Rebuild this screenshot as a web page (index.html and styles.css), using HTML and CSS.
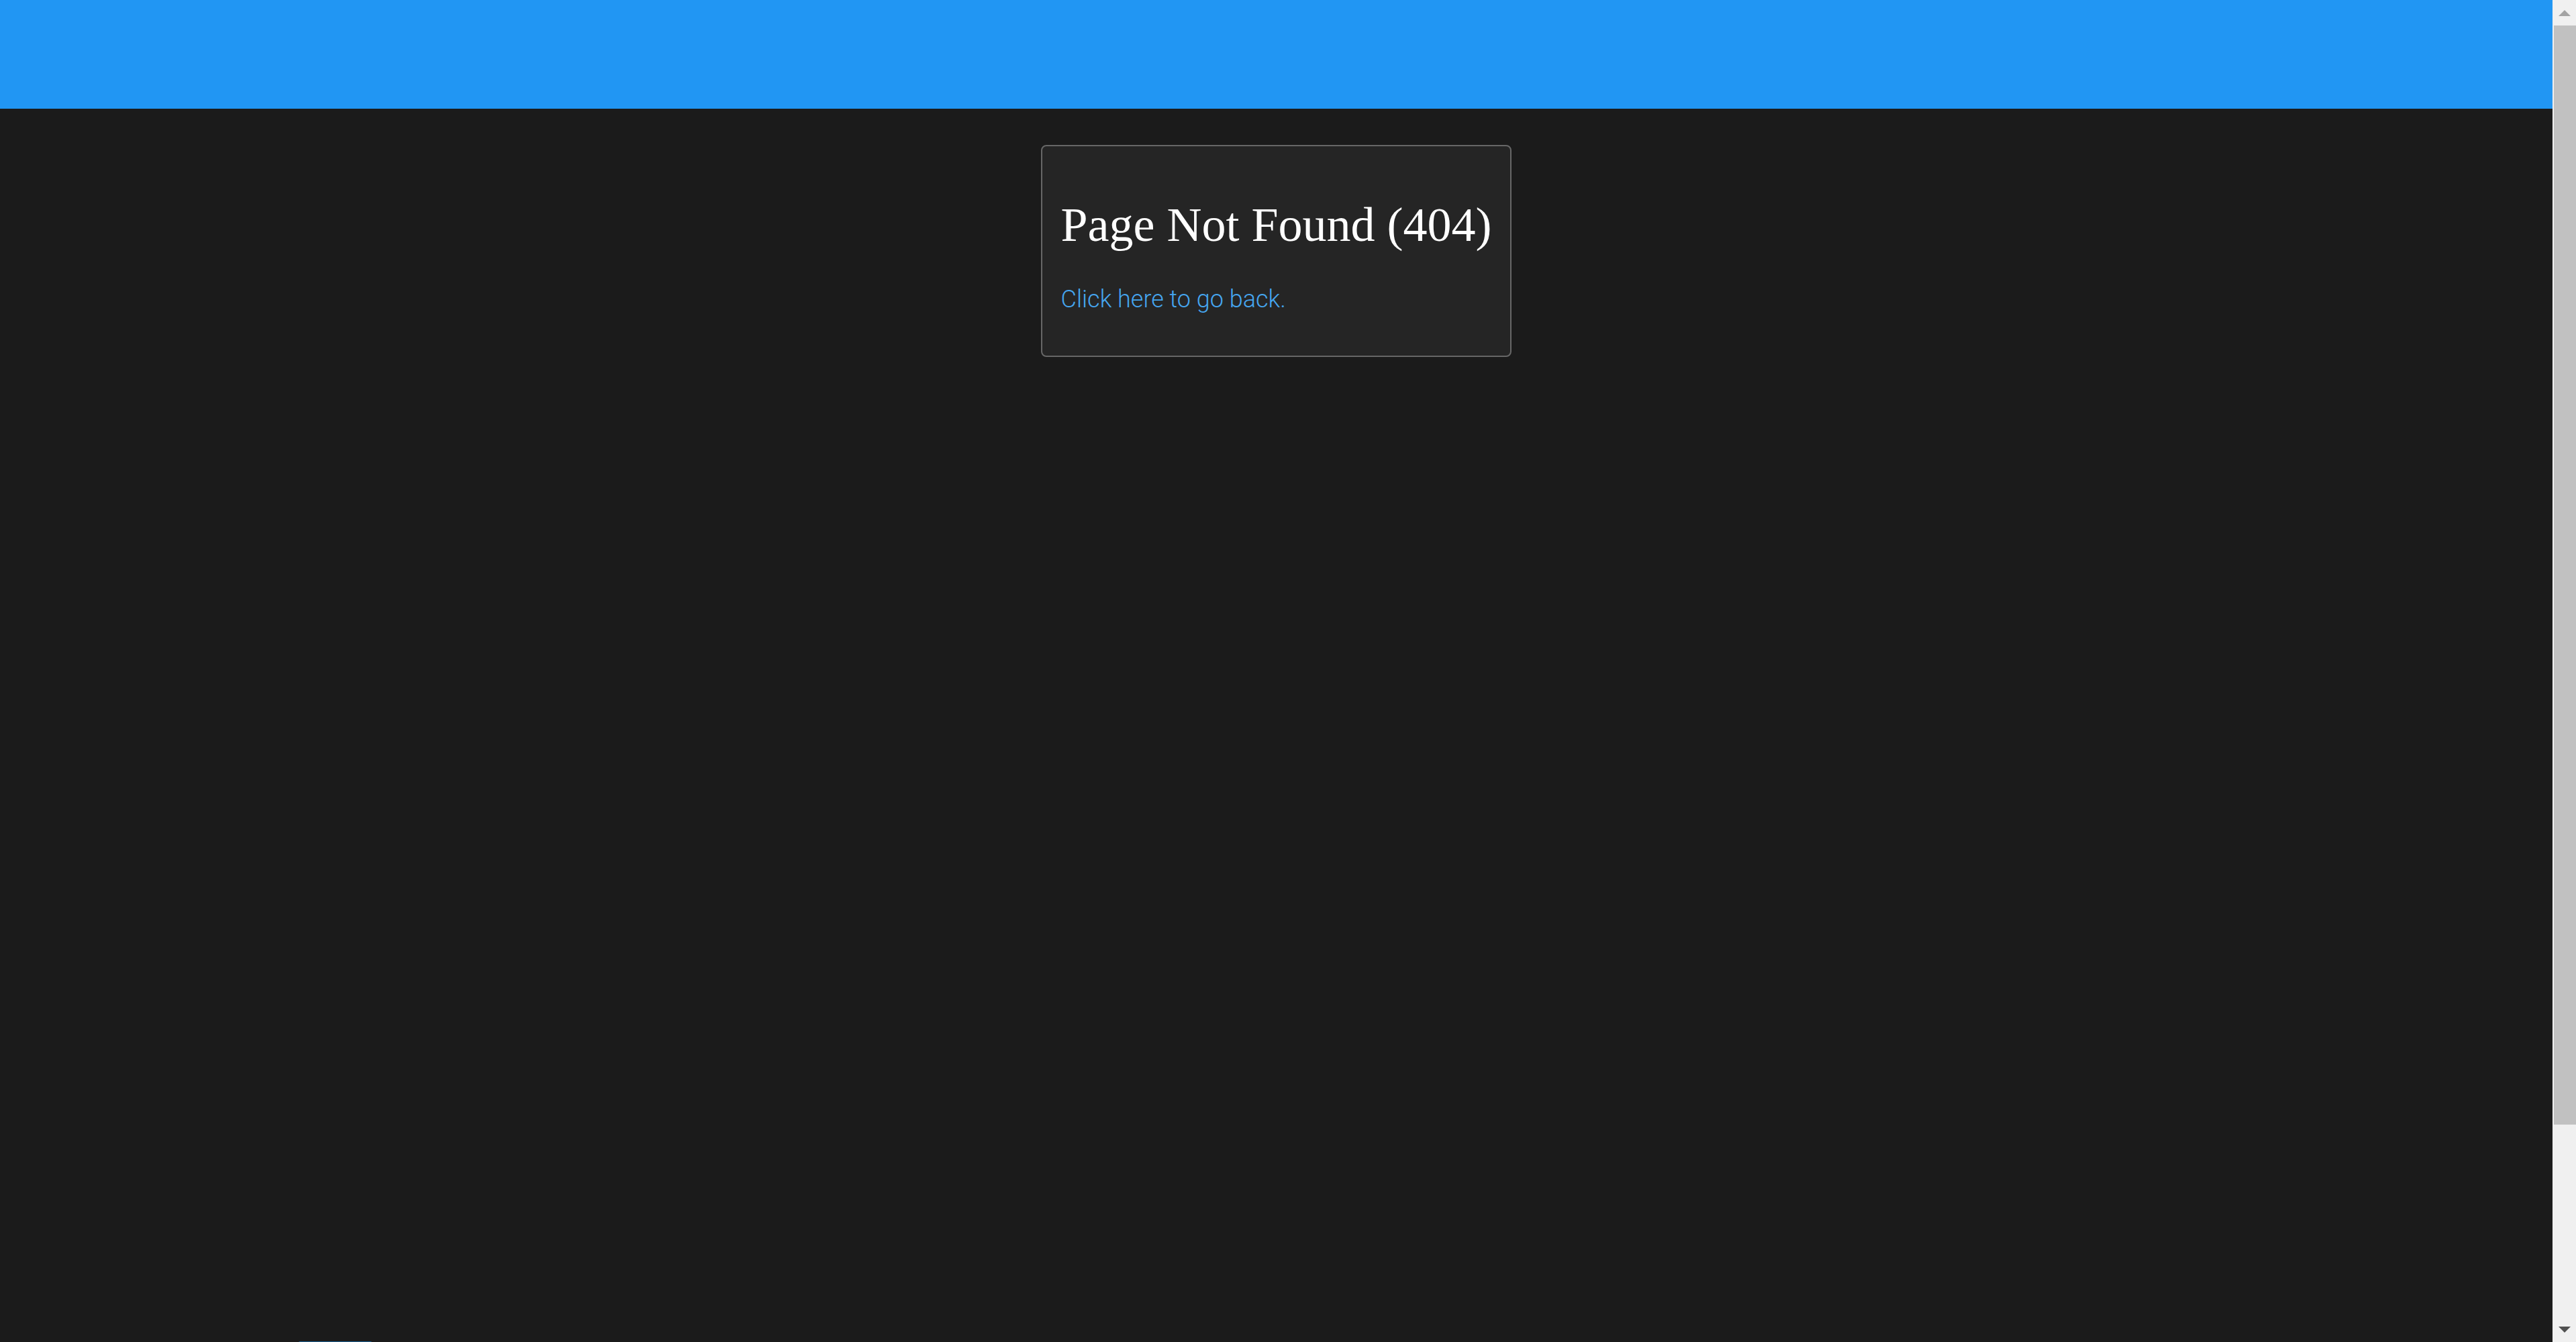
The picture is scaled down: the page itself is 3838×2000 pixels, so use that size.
FILE: index.html
```html
<!DOCTYPE html>
<html lang="en">
<head>
<meta charset="utf-8">
<title>Page Not Found</title>
<link rel="stylesheet" href="styles.css">
</head>
<body>
<div class="page">
  <header class="topbar"></header>
  <main class="main">
    <div class="card">
      <h1 class="card-title">Page Not Found (404)</h1>
      <p class="card-text"><a class="back-link" href="#">Click here to go back.</a></p>
    </div>
  </main>
  <footer class="footer">
    <div class="footer-btn"></div>
  </footer>
</div>
<div class="scrollbar" aria-hidden="true">
  <div class="sb-btn"><span class="sb-arrow sb-arrow-up"></span></div>
  <div class="sb-track"><div class="sb-thumb"></div></div>
  <div class="sb-btn"><span class="sb-arrow sb-arrow-down"></span></div>
</div>
</body>
</html>
```
FILE: styles.css
```css
html, body {
  margin: 0;
  height: 100%;
  overflow: hidden;
  background: #1b1b1b;
}
body {
  display: flex;
  font-family: Roboto, "Liberation Sans", sans-serif;
}
.page {
  flex: 1;
  min-width: 0;
  height: 100vh;
  overflow: hidden;
  background: #1b1b1b;
}
.topbar {
  height: 162px;
  background: #2196f3;
}
.main {
  height: 1837px;
  display: flex;
  justify-content: center;
  align-items: flex-start;
  padding-top: 54px;
  box-sizing: border-box;
}
.card {
  background: #252525;
  border: 2px solid #676767;
  border-radius: 8px;
  padding: 28px 28px 27px;
}
.card-title {
  font-family: "Liberation Serif", "Times New Roman", serif;
  font-weight: normal;
  font-size: 72px;
  color: #ffffff;
  margin: 48px 0;
}
.card-text {
  font-size: 36px;
  margin: 36px 0;
}
.back-link {
  color: #45a6f0;
  font-weight: 300;
  text-decoration: none;
}
.footer {
  height: 350px;
  padding-left: 445px;
}
.footer-btn {
  width: 109px;
  height: 44px;
  background: #1a5f91;
  border-radius: 2px;
}
.scrollbar {
  width: 35px;
  flex: none;
  height: 100vh;
  display: flex;
  flex-direction: column;
  background: #f0f0f0;
}
.sb-btn {
  height: 38px;
  flex: none;
  display: flex;
  justify-content: center;
  align-items: flex-start;
  padding-top: 15px;
  box-sizing: border-box;
}
.sb-arrow {
  width: 0;
  height: 0;
  border-left: 9px solid transparent;
  border-right: 9px solid transparent;
}
.sb-arrow-up {
  border-bottom: 9px solid #a3a3a3;
}
.sb-arrow-down {
  border-top: 9px solid #505050;
}
.sb-track {
  flex: 1;
  padding-left: 2px;
}
.sb-thumb {
  height: 1638px;
  background: #c1c1c1;
}
```
